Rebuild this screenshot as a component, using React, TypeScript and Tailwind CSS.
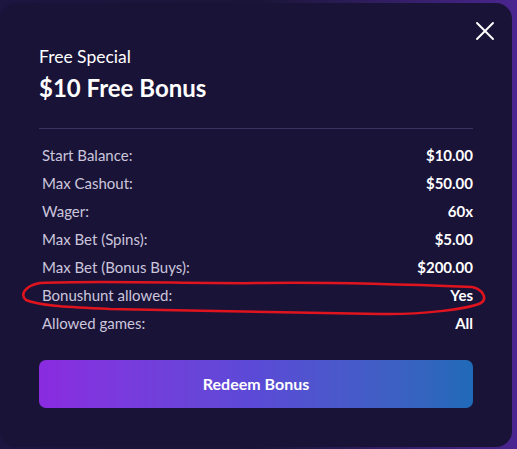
import { X } from 'lucide-react';

const rows = [
  { label: 'Start Balance:', value: '$10.00' },
  { label: 'Max Cashout:', value: '$50.00' },
  { label: 'Wager:', value: '60x' },
  { label: 'Max Bet (Spins):', value: '$5.00' },
  { label: 'Max Bet (Bonus Buys):', value: '$200.00' },
  { label: 'Bonushunt allowed:', value: 'Yes' },
  { label: 'Allowed games:', value: 'All' },
];

export default function App() {
  return (
    <div
      className="relative w-[517px] h-[449px] overflow-hidden bg-gradient-to-r from-[#1c1540] via-[#1a1538] to-[#4a2590] pt-[3px]"
      style={{ fontFamily: '"Lato", "Noto Sans", sans-serif' }}
    >
      <div className="relative w-[512px] h-[444px] bg-[#1a1338] rounded-[16px] px-[39px] pt-[43px]">
        <button className="absolute right-[11px] top-[12px] text-white">
          <X size={32} strokeWidth={1.4} />
        </button>

        <p className="text-[17.5px] leading-[22px] text-white">Free Special</p>
        <h2 className="mt-[5px] text-[24px] leading-[30px] font-bold text-white">$10 Free Bonus</h2>

        <div className="mt-[25px] h-px bg-[#3a3262] w-[434px]" />

        <div className="mt-[12px] flex flex-col w-[434px]">
          {rows.map(r => (
            <div key={r.label} className="flex justify-between items-center h-[28px] pl-[3px]">
              <span className="text-[15px] text-[#cbc6dc]">{r.label}</span>
              <span className="text-[15px] font-bold text-white">{r.value}</span>
            </div>
          ))}
        </div>

        <button className="mt-[23px] w-[434px] h-[48px] rounded-[7px] bg-gradient-to-r from-[#8a2be0] via-[#5a4ad6] to-[#1f6ab8] text-white font-bold text-[16px]">
          Redeem Bonus
        </button>
      </div>

      {/* red annotation loop */}
      <svg className="absolute left-0 top-0 pointer-events-none" width="517" height="449">
        <path
          d="M40 283 C 100 280, 200 284, 265 283 C 340 282, 420 285, 472 287 C 482 289, 488 298, 481 303 C 468 309, 420 315, 380 314 C 300 312, 200 311, 110 309 C 70 307, 40 306, 26 300 C 20 295, 24 286, 40 283 Z"
          fill="none"
          stroke="#e0141e"
          strokeWidth="2.5"
        />
      </svg>
    </div>
  );
}
